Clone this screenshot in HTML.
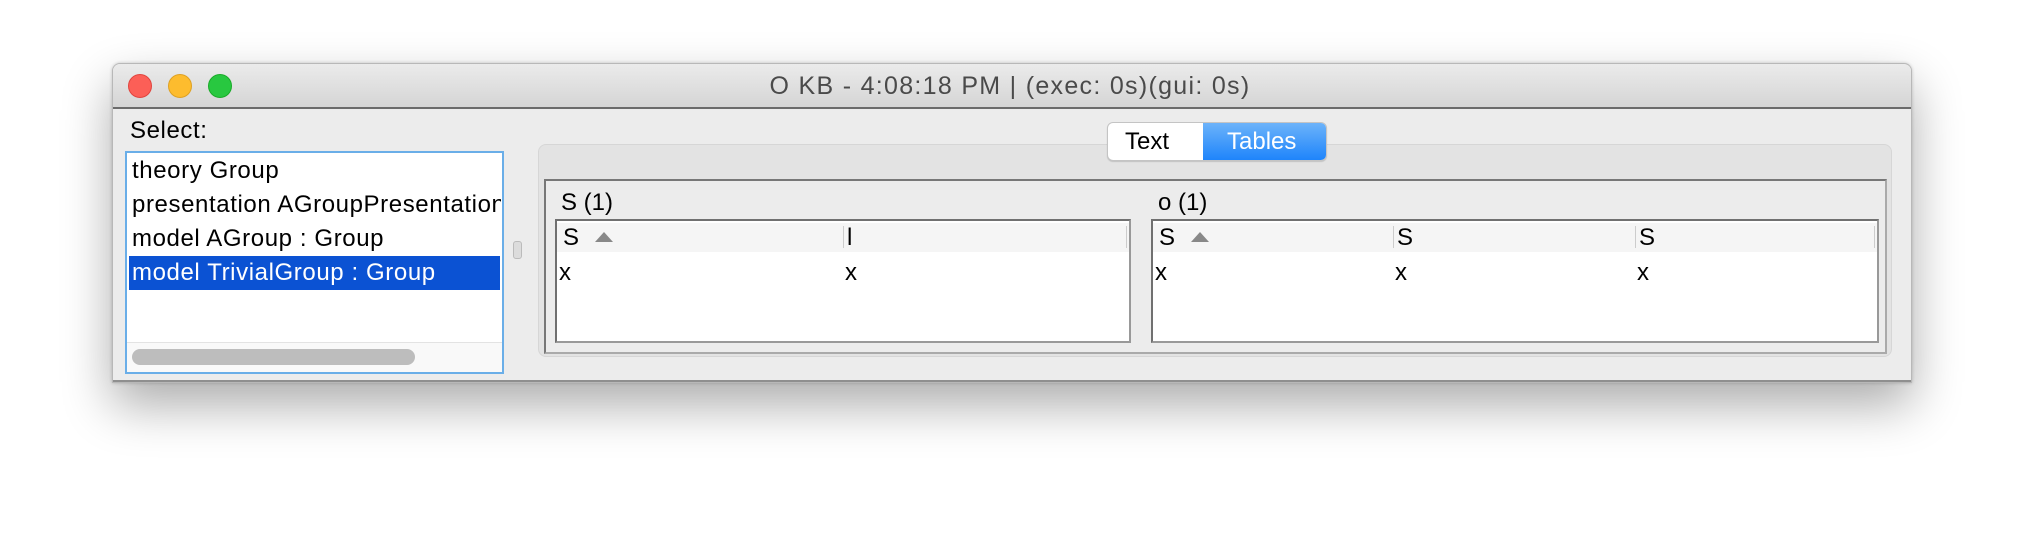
<!DOCTYPE html>
<html><head><meta charset="utf-8"><style>
*{margin:0;padding:0;box-sizing:border-box}
body{width:2024px;height:546px;background:#fff;position:relative;overflow:hidden;font-family:"Liberation Sans",sans-serif;}
.a{position:absolute}
.win{left:112px;top:63px;width:1800px;height:320px;background:#ececec;border:1px solid #b8b8b8;border-radius:8px 8px 0 0;box-shadow:0 22px 50px rgba(0,0,0,0.33),0 0 3px rgba(0,0,0,0.2);overflow:hidden}
.tb{left:0;top:0;width:1800px;height:45px;background:linear-gradient(#ebebeb,#d5d5d5);border-bottom:2px solid #6b6b6b}
.dot{width:24px;height:24px;border-radius:50%;top:10px}
.t{font-size:24px;color:#000;white-space:nowrap}
.l{letter-spacing:0.6px}
</style></head><body>
<div class="a win">
 <div class="a tb">
  <div class="a dot" style="left:15px;background:#fc5f57;border:1px solid #e0443e"></div>
  <div class="a dot" style="left:55px;background:#fdbc2e;border:1px solid #dea123"></div>
  <div class="a dot" style="left:95px;background:#28c840;border:1px solid #1aab29"></div>
  <div class="a t" style="left:-3px;width:1800px;text-align:center;top:8px;color:#4a4a4a;font-size:25px;letter-spacing:1.3px">O KB - 4:08:18 PM | (exec: 0s)(gui: 0s)</div>
 </div>
 <div class="a t l" style="left:17px;top:53px">Select:</div>
 <div class="a" style="left:12px;top:87px;width:379px;height:223px;background:#fff;border:2px solid #6aaee8">
  <div class="a t l" style="left:5px;top:4px">theory Group</div>
  <div class="a t l" style="left:5px;top:38px;width:369px;overflow:hidden">presentation AGroupPresentation</div>
  <div class="a t l" style="left:5px;top:72px">model AGroup : Group</div>
  <div class="a" style="left:2px;top:103px;width:371px;height:34px;background:#0b52d3"></div>
  <div class="a t l" style="left:5px;top:106px;color:#fff">model TrivialGroup : Group</div>
  <div class="a" style="left:0;top:189px;width:375px;height:30px;background:#f9f9f9;border-top:1px solid #e3e3e3"></div>
  <div class="a" style="left:5px;top:196px;width:283px;height:16px;background:#bdbdbd;border-radius:8px"></div>
 </div>
 <div class="a" style="left:400px;top:177px;width:9px;height:18px;background:#dcdcdc;border:1px solid #bbb;border-radius:3px"></div>
 <div class="a" style="left:425px;top:80px;width:1354px;height:213px;background:#e3e3e3;border:1px solid #d6d6d6;border-radius:8px"></div>
 <div class="a" style="left:994px;top:58px;width:220px;height:39px;border:1px solid #c4c4c4;border-radius:6px;background:#fff;overflow:hidden;box-shadow:0 1px 1px rgba(0,0,0,.15)">
  <div class="a t" style="left:17px;top:5px">Text</div>
  <div class="a" style="left:95px;top:0;width:125px;height:39px;background:linear-gradient(#6cb3fa,#1a82fb)"></div>
  <div class="a t" style="left:119px;top:5px;color:#fff">Tables</div>
 </div>
 <div class="a" style="left:431px;top:115px;width:1343px;height:175px;background:#ececec;border:2px solid #777;border-right-color:#aaa;border-bottom-color:#aaa">
  <div class="a t" style="left:15px;top:8px">S (1)</div>
  <div class="a" style="left:9px;top:38px;width:576px;height:124px;background:#fff;border:2px solid #707070;border-right-color:#999;border-bottom-color:#999">
   <div class="a" style="left:0;top:2px;width:572px;height:29px;background:#f5f5f5"></div>
   <div class="a t" style="left:6px;top:3px">S</div>
   <div class="a" style="left:38px;top:11px;width:0;height:0;border-left:9px solid transparent;border-right:9px solid transparent;border-bottom:10px solid #888"></div>
   <div class="a" style="left:286px;top:5px;width:1px;height:22px;background:#ccc"></div>
   <div class="a t" style="left:290px;top:3px">l</div>
   <div class="a" style="left:569px;top:5px;width:1px;height:22px;background:#ccc"></div>
   <div class="a t" style="left:2px;top:38px">x</div>
   <div class="a t" style="left:288px;top:38px">x</div>
  </div>
  <div class="a t" style="left:612px;top:8px">o (1)</div>
  <div class="a" style="left:605px;top:38px;width:728px;height:124px;background:#fff;border:2px solid #707070;border-right-color:#999;border-bottom-color:#999">
   <div class="a" style="left:0;top:2px;width:724px;height:29px;background:#f5f5f5"></div>
   <div class="a t" style="left:6px;top:3px">S</div>
   <div class="a" style="left:38px;top:11px;width:0;height:0;border-left:9px solid transparent;border-right:9px solid transparent;border-bottom:10px solid #888"></div>
   <div class="a" style="left:240px;top:5px;width:1px;height:22px;background:#ccc"></div>
   <div class="a t" style="left:244px;top:3px">S</div>
   <div class="a" style="left:482px;top:5px;width:1px;height:22px;background:#ccc"></div>
   <div class="a t" style="left:486px;top:3px">S</div>
   <div class="a" style="left:721px;top:5px;width:1px;height:22px;background:#ccc"></div>
   <div class="a t" style="left:2px;top:38px">x</div>
   <div class="a t" style="left:242px;top:38px">x</div>
   <div class="a t" style="left:484px;top:38px">x</div>
  </div>
 </div>
 <div class="a" style="left:0;top:316px;width:1800px;height:4px;background:#8f8f8f"></div>
</div>
</body></html>
